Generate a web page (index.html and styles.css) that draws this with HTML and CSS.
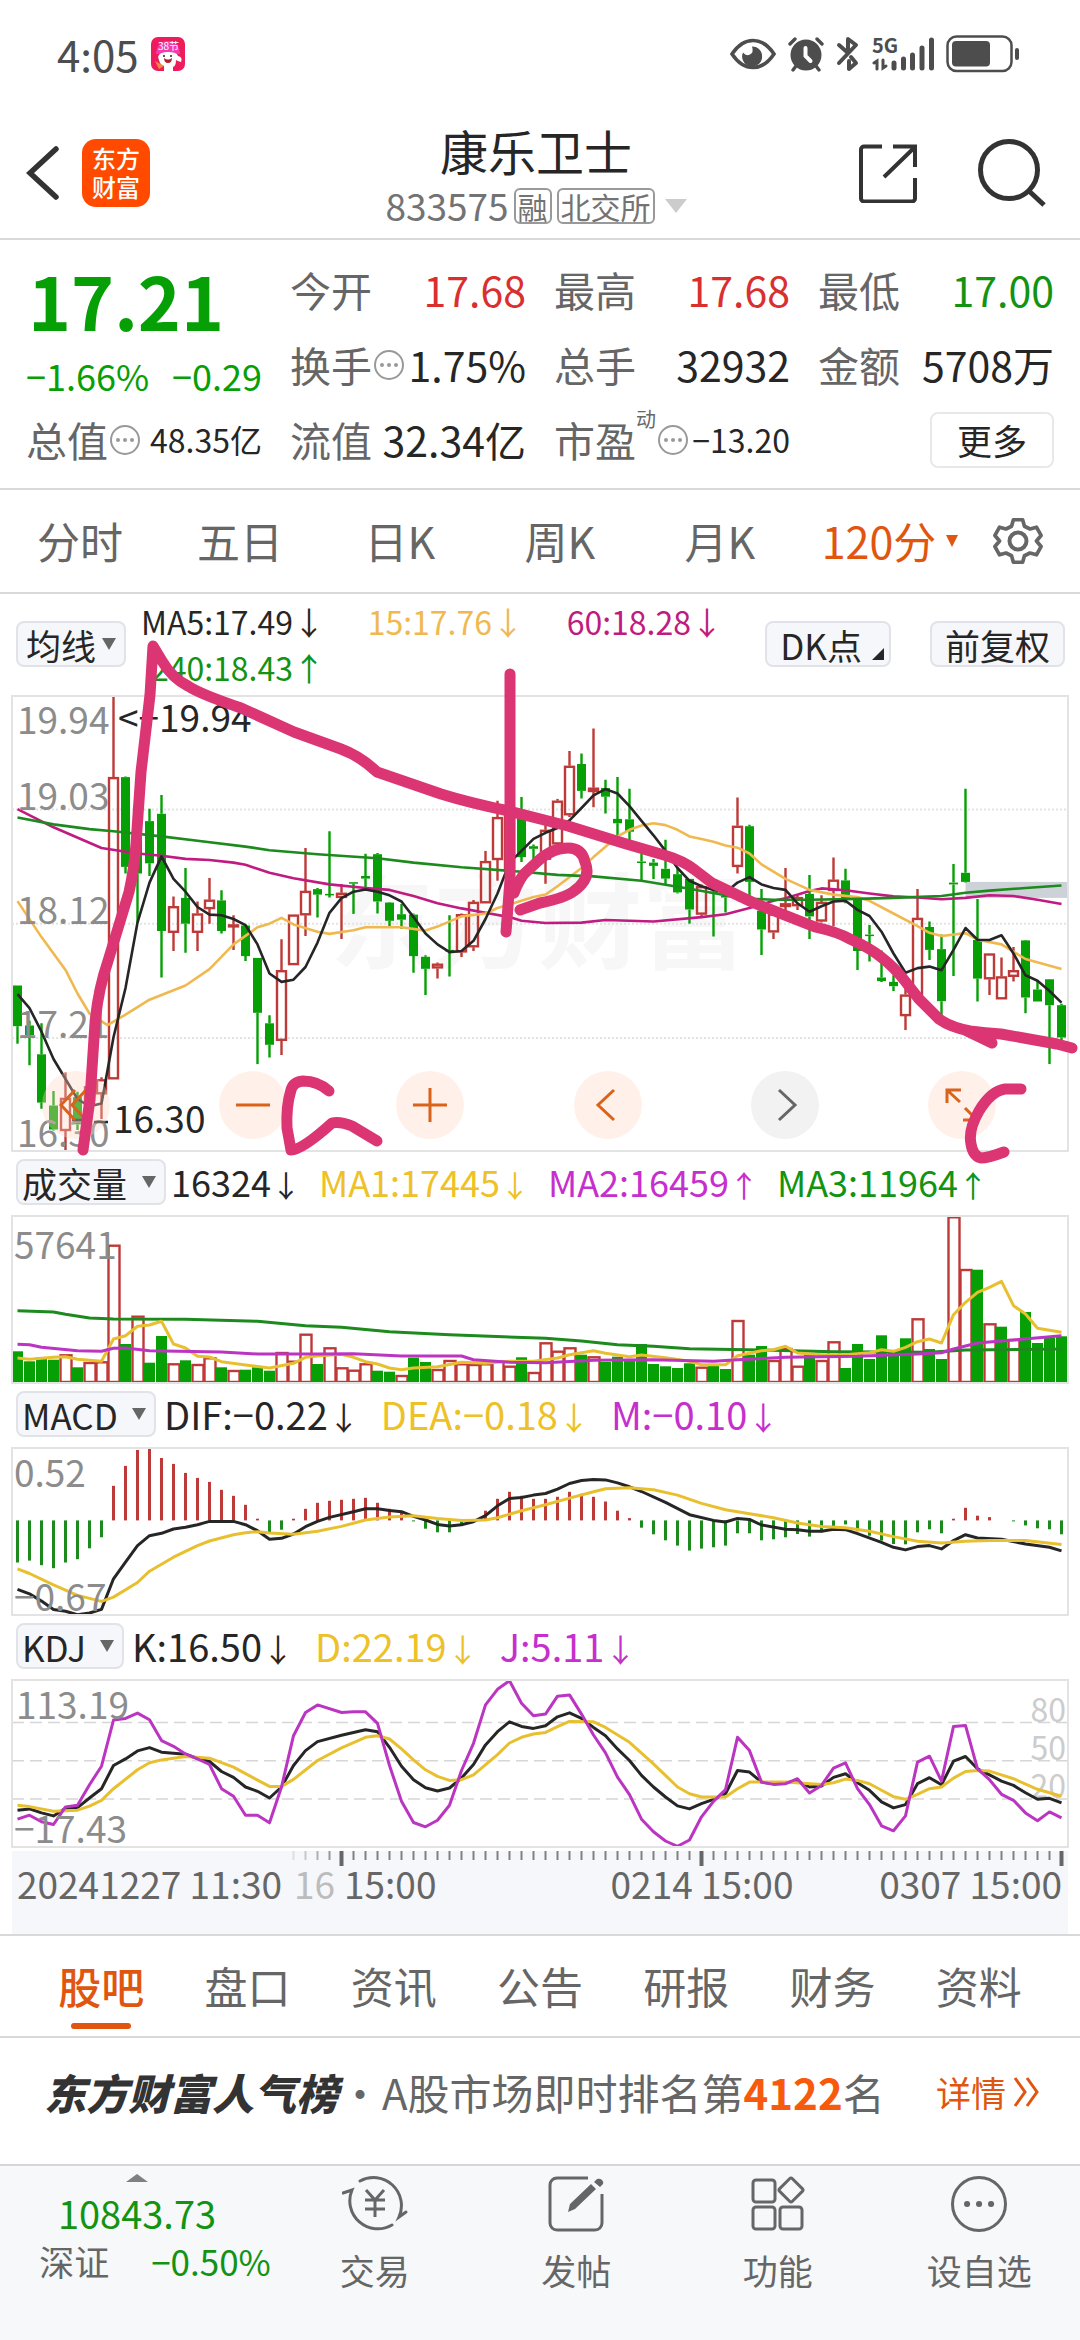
FILE: index.html
```html
<!DOCTYPE html>
<html lang="zh-CN">
<head>
    <meta charset="UTF-8">
    <meta name="viewport" content="width=device-width, initial-scale=1.0">
    <title>康乐卫士 833575</title>
    <link rel="stylesheet" href="styles.css">
</head>
<body>
    <div class="status">
        <span class="time">4:05</span>
        <svg class="promo" viewBox="0 0 34 34" width="34" height="34">
            <rect width="34" height="34" rx="7" fill="#ee1c5c"/>
            <path d="M5 17Q6 4 17 4t12 13z" fill="#f53bb0"/>
            <text x="7" y="13" font-size="10" fill="#fff">38节</text>
            <path d="M7 20q1-5 10-5t10 4q5 1 3 6-4-1-5-2 0 6-3 7v4H13v-5q-4-1-5-6z" fill="#fff"/>
            <path d="M13 21q4 3 8 0 0 5-4 5t-4-5z" fill="#b3202a"/>
            <circle cx="13" cy="19" r="1" fill="#222"/><circle cx="20" cy="19" r="1" fill="#222"/>
            <path d="M4 24l9 5-5 3z" fill="#f08a3c"/>
        </svg>
        <div class="status-icons">
            <svg viewBox="0 0 46 32" width="46" height="32" fill="none" stroke="#4d4d4d">
                <path d="M2 16Q11 2.500 23 2.500T44 16Q35 29.500 23 29.500T2 16z" stroke-width="3.600"/>
                <path d="M22 8.500a10 10 0 1 1-9 6q3 4 7 2t2-8z" fill="#4d4d4d" stroke="none"/>
            </svg>
            <svg viewBox="0 0 36 36" width="36" height="36" fill="none" stroke="#4d4d4d" stroke-width="3.400" stroke-linecap="round">
                <circle cx="18" cy="19" r="15.500" fill="#4d4d4d" stroke="none"/>
                <path d="M2 8l5-5M34 8l-5-5M8 30l-3 4M28 30l3 4"/>
                <path d="M17.500 12v8l5 5" stroke="#fff" stroke-width="4"/>
            </svg>
            <svg viewBox="0 0 24 36" width="24" height="36" fill="none" stroke="#4d4d4d" stroke-width="4" stroke-linecap="round" stroke-linejoin="round">
                <path d="M3 9l9 8V3l8 6L3 27M15 21l5 6-7 6v-8"/>
            </svg>
            <svg viewBox="0 0 62 36" width="62" height="36" fill="none" stroke="#4d4d4d" stroke-width="5" stroke-linecap="round">
                <text class="net" x="0" y="17" fill="#4d4d4d" stroke="none">5G</text>
                <path d="M22 27v5M31.500 23v9M40.500 19v13M50 12v20M59.500 4v28"/>
                <path d="M2 27l3-2v8M11 24v8l3-2" stroke-width="3"/>
            </svg>
            <svg viewBox="0 0 74 38" width="74" height="38">
                <rect x="1.500" y="1.500" width="64" height="34.500" rx="9" fill="none" stroke="#4d4d4d" stroke-width="2.500"/>
                <rect x="6" y="6" width="38" height="25.500" rx="4" fill="#4d4d4d"/>
                <rect x="69" y="13" width="4" height="12" rx="2" fill="#4d4d4d"/>
            </svg>
        </div>
    </div>

    <header class="top">
        <div class="top-left">
            <a href="#" class="back" aria-label="返回">
                <svg viewBox="0 0 34 56" width="34" height="56" fill="none" stroke="#333" stroke-width="5.500" stroke-linecap="round"><path d="M30 4L4 28l26 24"/></svg>
            </a>
            <a href="#" class="logo"><span>东方</span><span>财富</span></a>
        </div>
        <div class="stock">
            <h1>康乐卫士</h1>
            <div class="code">833575<span class="tag">融</span><span class="tag">北交所</span><i class="tri tri-light"></i></div>
        </div>
        <div class="top-right">
            <button class="icon-btn" aria-label="分享">
                <svg viewBox="0 0 60 60" width="60" height="60" fill="none" stroke="#333" stroke-width="4"><path d="M24 3.500H6a3 3 0 0 0-3 3v49a3 3 0 0 0 3 3h48a3 3 0 0 0 3-3V35M35 3.500h22V24M57 4L26 34"/></svg>
            </button>
            <button class="icon-btn" aria-label="搜索">
                <svg viewBox="0 0 68 68" width="68" height="68" fill="none" stroke="#333" stroke-width="5"><circle cx="31" cy="31" r="28.500"/><path d="M51 52l15 14"/></svg>
            </button>
        </div>
    </header>

    <section class="quote">
        <div class="price-box">
            <div class="price">17.21</div>
            <div class="change"><span>−1.66%</span><span>−0.29</span></div>
        </div>
        <div class="item"><span>今开</span><b class="red">17.68</b></div>
        <div class="item"><span>最高</span><b class="red">17.68</b></div>
        <div class="item"><span>最低</span><b class="green">17.00</b></div>
        <div class="item"><span>换手<i class="more-dot"></i></span><b>1.75%</b></div>
        <div class="item"><span>总手</span><b>32932</b></div>
        <div class="item"><span>金额</span><b>5708万</b></div>
        <div class="item"><span>总值<i class="more-dot"></i></span><b class="small">48.35亿</b></div>
        <div class="item"><span>流值</span><b>32.34亿</b></div>
        <div class="item"><span>市盈<sup>动</sup><i class="more-dot"></i></span><b class="small">−13.20</b></div>
        <div class="item item-more"><button class="more">更多</button></div>
    </section>

    <nav class="period">
        <a href="#">分时</a>
        <a href="#">五日</a>
        <a href="#">日K</a>
        <a href="#">周K</a>
        <a href="#">月K</a>
        <a href="#" class="active">120分<i class="tri tri-small"></i></a>
        <button class="icon-btn" aria-label="设置">
            <svg viewBox="0 0 52 52" width="52" height="52" fill="none" stroke="#666" stroke-width="4" stroke-linejoin="round">
                <path d="M21 3h10l2 7 6 3 7-2 5 9-5 6 5 6-5 9-7-2-6 3-2 7H21l-2-7-6-3-7 2-5-9 5-6-5-6 5-9 7 2 6-3z" transform="translate(2 2) scale(.923)"/>
                <circle cx="26" cy="26" r="8.500"/>
            </svg>
        </button>
    </nav>

    <main class="charts">
        <div class="ma-bar">
            <label class="picker picker-tight"><select aria-label="主图指标"><option>均线</option></select></label>
            <div class="ma-list">
                <span class="c-black">MA5:17.49↓</span>
                <span class="c-amber">15:17.76↓</span>
                <span class="c-purple">60:18.28↓</span>
                <span class="c-green">240:18.43↑</span>
            </div>
            <button class="chip chip-corner">DK点</button>
            <button class="chip">前复权</button>
        </div>

        <div class="panel">
            <svg id="kline" viewBox="0 0 1056 455"></svg>
            <div class="tools">
                <button class="round" aria-label="最左"><svg viewBox="0 0 34 34" width="34" height="34"><path d="M16 2L2 17l14 15M27 2L13 17l14 15"/></svg></button>
                <button class="round" aria-label="缩小"><svg viewBox="0 0 34 34" width="34" height="34"><path d="M0 17h34"/></svg></button>
                <button class="round" aria-label="放大"><svg viewBox="0 0 34 34" width="34" height="34"><path d="M0 17h34M17 0v34"/></svg></button>
                <button class="round" aria-label="左移"><svg viewBox="0 0 34 34" width="34" height="34"><path d="M23 2L7 17l16 15"/></svg></button>
                <button class="round round-grey" aria-label="右移"><svg viewBox="0 0 34 34" width="34" height="34"><path d="M11 2l16 15-16 15"/></svg></button>
                <button class="round" aria-label="全屏"><svg viewBox="0 0 34 34" width="34" height="34"><path d="M2 15V2h14M2 2l13 12M32 19v13H18M32 32L20 20"/></svg></button>
            </div>
        </div>

        <div class="sub-bar sub-volume">
            <label class="picker"><select aria-label="副图一"><option>成交量</option></select></label>
            <span class="c-black">16324<i>↓</i></span>
            <span class="c-yellow">MA1:17445<i>↓</i></span>
            <span class="c-magenta">MA2:16459<i>↑</i></span>
            <span class="c-green">MA3:11964<i>↑</i></span>
        </div>
        <div class="panel"><svg id="volume" viewBox="0 0 1056 167"></svg></div>

        <div class="sub-bar">
            <label class="picker"><select aria-label="副图二"><option>MACD</option></select></label>
            <span class="c-black">DIF:−0.22<i>↓</i></span>
            <span class="c-yellow">DEA:−0.18<i>↓</i></span>
            <span class="c-magenta">M:−0.10<i>↓</i></span>
        </div>
        <div class="panel"><svg id="macd" viewBox="0 0 1056 167"></svg></div>

        <div class="sub-bar">
            <label class="picker"><select aria-label="副图三"><option>KDJ</option></select></label>
            <span class="c-black">K:16.50<i>↓</i></span>
            <span class="c-yellow">D:22.19<i>↓</i></span>
            <span class="c-magenta">J:5.11<i>↓</i></span>
        </div>
        <div class="panel"><svg id="kdj" viewBox="0 0 1056 167"></svg></div>

        <div class="axis"><svg id="axis" viewBox="0 0 1056 83"></svg></div>

        <!-- hand drawn marks over the charts -->
        <svg class="marks" viewBox="0 594 1080 600">
            <path d="M83 1150L90 1099L95 1023Q98 990 108 961L129 892Q134 870 136 844L141 772L150 695L153 646L162 661Q172 678 188 686Q200 694 241 708L294 732L341 749Q360 756 377 772L441 794Q470 803 509 811L568 826L623 843L664 855Q684 861 695 870L712 883L754 903L815 927Q838 932 850 939Q870 948 881 957Q895 968 905 981L919 999L939 1019Q950 1027 970 1031Q985 1033 1001 1034L1057 1044L1072 1048M965 1030L992 1043"/>
            <path d="M510 674V880L506 932M520 910L540 903Q565 898 574 891Q592 878 585 862Q582 848 568 848Q552 848 538 861L524 874Q518 882 514 893"/>
            <path d="M329 1091Q318 1081 303 1081Q293 1082 291 1090Q286 1106 287 1128L291 1150Q302 1150 332 1123Q340 1121 352 1126L377 1141"/>
            <path d="M1021 1089H1005Q991 1091 979 1111Q968 1130 971 1144Q973 1156 981 1158Q988 1158 1004 1152"/>
        </svg>
    </main>

    <nav class="tabs">
        <a href="#" class="active">股吧</a>
        <a href="#">盘口</a>
        <a href="#">资讯</a>
        <a href="#">公告</a>
        <a href="#">研报</a>
        <a href="#">财务</a>
        <a href="#">资料</a>
    </nav>

    <section class="rank">
        <strong>东方财富人气榜</strong>
        <span class="dot">·</span>
        <span>A股市场即时排名第<b>4122</b>名</span>
        <a href="#">详情<svg viewBox="0 0 30 32" width="30" height="32" fill="none" stroke="#e0560f" stroke-width="3"><path d="M3 2l10 14L3 30M15 2l10 14-10 14"/></svg></a>
    </section>

    <footer class="bottom">
        <a href="#" class="index">
            <i class="tri-up"></i>
            <span class="index-value">10843.73</span>
            <span class="index-row"><span>深证</span><span class="green">−0.50%</span></span>
        </a>
        <a href="#">
            <svg viewBox="0 0 66 60" width="66" height="60" fill="none" stroke="#666" stroke-width="3" stroke-linecap="round">
                <path d="M18 7A28 28 0 0 1 57 43l7-5M50 51A28 28 0 0 1 10 16L1 19"/>
                <path d="M24 16l9 10 9-10M23 26h20M23 35h20M33 26v17" stroke-linecap="butt"/>
            </svg>
            交易
        </a>
        <a href="#">
            <svg viewBox="0 0 60 60" width="60" height="60" fill="none" stroke="#666" stroke-width="3">
                <path d="M42 4H11a7 7 0 0 0-7 7v38a7 7 0 0 0 7 7h38a7 7 0 0 0 7-7V20"/>
                <path d="M22 38l2-8 21-20 5 5-21 20zM48 8l3-3q3-1 5 1t1 4l-3 3z" fill="#666" stroke="none"/>
            </svg>
            发帖
        </a>
        <a href="#">
            <svg viewBox="0 0 56 60" width="56" height="60" fill="none" stroke="#666" stroke-width="3">
                <rect x="3" y="6" width="22" height="22" rx="3"/><rect x="3" y="33" width="22" height="22" rx="3"/><rect x="30" y="33" width="22" height="22" rx="3"/>
                <rect x="32" y="7" width="18" height="18" rx="2" transform="rotate(45 41 16)"/>
            </svg>
            功能
        </a>
        <a href="#">
            <svg viewBox="0 0 60 60" width="60" height="60" fill="none" stroke="#666" stroke-width="3">
                <circle cx="30" cy="30" r="26.500"/>
                <path d="M18 30h.1M30 30h.1M42 30h.1" stroke-width="6" stroke-linecap="round"/>
            </svg>
            设自选
        </a>
    </footer>
    <script src="script.js"></script>
</body>
</html>
```
FILE: styles.css
```css
*{
    margin: 0;
    padding: 0;
    box-sizing: border-box;
}
body{
    background-color: #fff;
    color: #262626;
    font-family: "Noto Sans CJK SC", sans-serif;
    line-height: 1.2;
}
a{
    color: inherit;
    text-decoration: none;
}
button, select{
    font-family: inherit;
    color: inherit;
    background: none;
    border: none;
}
i{
    font-style: normal;
}
svg{
    display: block;
}
.red{
    color: #d9302f;
}
.green, .c-green{
    color: #129312;
}
.c-black{
    color: #262626;
}
.c-amber{
    color: #f0b950;
}
.c-yellow{
    color: #edc127;
}
.c-purple{
    color: #bf1b80;
}
.c-magenta{
    color: #c62fcd;
}

/* status bar */
.status{
    display: flex;
    align-items: center;
    height: 108px;
    padding: 0 60px 0 57px;
}
.time{
    font-size: 42px;
    color: #4d4d4d;
}
.promo{
    margin-left: 12px;
}
.status-icons{
    display: flex;
    align-items: center;
    gap: 12px;
    margin-left: auto;
}
.net{
    font-size: 20px;
    font-weight: bold;
}

/* header */
.top{
    display: grid;
    grid-template-columns: 1fr auto 1fr;
    align-items: center;
    height: 132px;
    padding: 0 34px 0 26px;
    border-bottom: 2px solid #d9d9d9;
}
.top-left, .top-right{
    display: flex;
    align-items: center;
}
.top-left{
    gap: 22px;
}
.top-right{
    justify-content: flex-end;
    gap: 60px;
}
.icon-btn{
    display: flex;
    align-items: center;
    justify-content: center;
}
.logo{
    display: flex;
    flex-direction: column;
    align-items: center;
    justify-content: center;
    width: 68px;
    height: 68px;
    border-radius: 14px;
    background-color: #ff4a00;
    color: #fff;
    font-size: 24px;
    font-weight: 500;
}
.stock{
    text-align: center;
}
.stock h1{
    font-size: 48px;
    font-weight: normal;
}
.code{
    display: flex;
    align-items: center;
    justify-content: center;
    gap: 5px;
    margin-top: 8px;
    font-size: 37px;
    line-height: 1;
    color: #737373;
}
.tag{
    padding: 1px 2px;
    border: 2px solid #999;
    border-radius: 6px;
    font-size: 30px;
}
.tri{
    border: 11px solid transparent;
    border-bottom: 0;
    border-top: 14px solid #ccc;
}
.tri-light{
    margin-left: 5px;
}
.tri-small{
    border-width: 6px;
    border-top: 12px solid #e0560f;
    border-bottom: 0;
    margin-left: 10px;
}

/* quote */
.quote{
    display: grid;
    grid-template-columns: repeat(4, 1fr);
    grid-auto-rows: 75px;
    column-gap: 28px;
    padding: 12px 26px 11px;
    border-bottom: 2px solid #d9d9d9;
    font-size: 41px;
}
.price-box{
    grid-row: span 2;
    color: #06a006;
}
.price{
    font-size: 73px;
    font-weight: bold;
    padding: 4px 0 0 2px;
}
.change{
    display: flex;
    justify-content: space-between;
    margin-top: 10px;
    font-size: 36px;
}
.item{
    display: flex;
    align-items: center;
    justify-content: space-between;
    white-space: nowrap;
}
.item > span{
    display: flex;
    align-items: center;
    color: #666;
}
.item b{
    font-weight: normal;
}
.item .small{
    font-size: 32px;
}
.item sup{
    align-self: flex-start;
    margin-top: -8px;
    font-size: 20px;
}
.more-dot{
    display: flex;
    align-items: center;
    justify-content: center;
    width: 30px;
    height: 30px;
    margin-left: 2px;
    border: 2px solid #999;
    border-radius: 50%;
}
.more-dot::after{
    content: "";
    width: 4px;
    height: 4px;
    border-radius: 50%;
    background-color: #999;
    box-shadow: -7px 0 #999, 7px 0 #999;
}
.item.item-more{
    justify-content: flex-end;
}
.more{
    width: 124px;
    height: 56px;
    border: 2px solid #e8e8e8;
    border-radius: 8px;
    font-size: 35px;
}

/* period tabs */
.period{
    display: grid;
    grid-template-columns: repeat(5, 32fr) 36fr 15fr;
    align-items: center;
    height: 104px;
    padding-right: 25px;
    border-bottom: 2px solid #d9d9d9;
    font-size: 43px;
    color: #666;
}
.period a{
    display: flex;
    align-items: center;
    justify-content: center;
}
.period .active, .tabs .active{
    color: #e0560f;
}

/* charts */
.charts{
    position: relative;
    padding: 0 12px;
}
.ma-bar{
    display: flex;
    align-items: center;
    height: 102px;
    padding: 0 3px 2px 4px;
}
.picker{
    display: flex;
    align-items: center;
    height: 46px;
    padding: 0 8px 0 4px;
    border: 2px solid #e1e3e8;
    border-radius: 8px;
    background-color: #f6f7fa;
}
.picker select{
    appearance: none;
    font-size: 35px;
    margin-right: 14px;
}
.picker::after{
    content: "";
    border: 7px solid transparent;
    border-top: 12px solid #666;
    border-bottom: 0;
}
.picker.picker-tight{
    padding-left: 8px;
}
.picker-tight select{
    margin-right: 5px;
}
.ma-list{
    display: grid;
    grid-template-columns: repeat(3, 199px);
    row-gap: 8px;
    margin-right: auto;
    font-size: 32px;
    text-align: right;
}
.ma-list span{
    white-space: nowrap;
}
.chip{
    position: relative;
    height: 46px;
    margin-left: 39px;
    padding: 0 13px;
    border: 2px solid #e1e3e8;
    border-radius: 8px;
    background-color: #f6f7fa;
    font-size: 35px;
    line-height: 1;
    white-space: nowrap;
}
.chip.chip-corner{
    padding-right: 27px;
    margin-left: 0;
}
.chip-corner::after{
    content: "";
    position: absolute;
    right: 5px;
    bottom: 5px;
    border-left: 12px solid transparent;
    border-bottom: 12px solid #262626;
}
.panel{
    position: relative;
    outline: 2px solid #e3e3e3;
    outline-offset: -1px;
}
.panel > svg, .axis svg{
    width: 100%;
    height: auto;
}
.label{
    font-size: 37px;
    fill: #8c8c8c;
}
.label-dark{
    font-size: 37px;
    fill: #262626;
}
.label-level{
    font-size: 32px;
    fill: #ccc;
}
.label-date{
    font-size: 37px;
    fill: #666;
}
.watermark{
    font-size: 104px;
    font-weight: bold;
    fill: #f7f7f7;
}
.tools{
    position: absolute;
    left: 0;
    right: 0;
    bottom: 12px;
    display: flex;
    justify-content: space-between;
    padding: 0 72px 0 30px;
}
.round{
    display: flex;
    align-items: center;
    justify-content: center;
    width: 68px;
    height: 68px;
    border-radius: 50%;
    background-color: rgba(255, 214, 192, .35);
}
.round svg{
    fill: none;
    stroke: #d9631b;
    stroke-width: 3;
}
.round.round-grey{
    background-color: #f2f2f2;
}
.round-grey svg{
    stroke: #666;
}
.sub-bar{
    display: flex;
    align-items: center;
    gap: 21px;
    height: 65px;
    padding: 0 4px 3px;
    font-size: 38px;
    white-space: nowrap;
}
.sub-bar.sub-volume{
    gap: 18px;
    font-size: 36px;
}
.sub-bar .picker{
    margin-right: -13px;
}
.sub-bar i{
    font-size: 32px;
}
.sub-volume i{
    font-size: 30px;
}
.axis{
    margin-top: 4px;
    background-color: #f6f7fa;
}
.marks{
    position: absolute;
    left: 0;
    top: 0;
    width: 100%;
    pointer-events: none;
    fill: none;
    stroke: #db3573;
    stroke-width: 11;
    stroke-linecap: round;
    stroke-linejoin: round;
}

/* tabs */
.tabs{
    display: flex;
    height: 104px;
    padding: 0 28px;
    border-top: 2px solid #d9d9d9;
    border-bottom: 2px solid #d9d9d9;
    font-size: 43px;
    color: #666;
}
.tabs a{
    flex: 1;
    display: flex;
    align-items: center;
    justify-content: center;
    position: relative;
}
.tabs .active{
    font-weight: 500;
}
.tabs .active::after{
    content: "";
    position: absolute;
    bottom: 7px;
    width: 60px;
    height: 6px;
    border-radius: 3px;
    background-color: #e0560f;
}

/* rank */
.rank{
    display: flex;
    align-items: center;
    height: 126px;
    padding: 0 38px 18px 44px;
    font-size: 42px;
    color: #666;
    white-space: nowrap;
}
.rank strong{
    color: #333;
    font-style: italic;
    font-weight: 900;
}
.rank .dot{
    width: 44px;
    text-align: center;
}
.rank b{
    color: #f75a0c;
}
.rank a{
    display: flex;
    align-items: center;
    gap: 6px;
    margin-left: auto;
    font-size: 35px;
    color: #e0560f;
}

/* bottom bar */
.bottom{
    display: grid;
    grid-template-columns: 34fr repeat(4, 25fr);
    height: 176px;
    border-top: 2px solid #d4d6d9;
    background-color: #f6f8fa;
    font-size: 35px;
    color: #666;
}
.bottom a{
    display: flex;
    flex-direction: column;
    align-items: center;
    gap: 15px;
    padding-top: 8px;
}
.bottom .index{
    gap: 4px;
}
.tri-up{
    border: 11px solid transparent;
    border-top: 0;
    border-bottom: 8px solid #808080;
}
.index-value{
    margin-top: 4px;
    font-size: 38px;
    color: #129312;
}
.index-row{
    display: flex;
    align-items: center;
    gap: 42px;
    padding-left: 36px;
}
```
FILE: script.js
```js
const NS = 'http://www.w3.org/2000/svg';
const STEP = 12;
const RED = '#be3a38';
const GREEN = '#06a006';
const BLACK = '#262626';
const YELLOW = '#e8c02f';
const MAGENTA = '#bb35c2';
const LINE_GREEN = '#1d8a1d';

function add(svg, name, attrs, text) {
    const el = document.createElementNS(NS, name);
    for (const key in attrs) el.setAttribute(key, attrs[key]);
    if (text) el.textContent = text;
    svg.appendChild(el);
    return el;
}

// maps a raw value to the panel height
function scale(top, bottom, height) {
    return v => Math.round((v - top) * height / (bottom - top) * 10) / 10;
}

function xAt(i) {
    return 5.5 + i * STEP;
}

// data is a flat list: index, value, index, value...
function line(svg, y, data, color, width = 3) {
    const nums = data.trim().split(/\s+/).map(Number);
    let points = '';
    for (let k = 0; k < nums.length; k += 2) {
        points += xAt(nums[k]) + ',' + y(nums[k + 1]) + ' ';
    }
    add(svg, 'polyline', { points, fill: 'none', stroke: color, 'stroke-width': width, 'stroke-linejoin': 'round' });
}

function label(svg, x, y, text, cls = 'label', anchor = 'start') {
    return add(svg, 'text', { x, y, class: cls, 'text-anchor': anchor }, text);
}

// color, body top, body bottom, high, low
const candles = `g 1088 1200 1088 1248|g 1198 1224 1185 1307|g 1277 1410 1192 1427|g 1418 1484 1378 1487
r 1397 1488 1327 1545|g 1395 1470 1380 1485|r 1365 1415 1360 1430|r 1346 1387 1340 1455|r 515 1346 292 1346
g 515 762 513 780|g 660 780 640 915|g 636 752 602 787|g 616 938 564 1066|r 870 943 843 993|g 847 918 765 998
r 890 943 857 993|r 852 878 792 918|g 854 938 826 945|r 920 927 895 990|g 923 1007 920 1021|g 1012 1163 1012 1304
g 1192 1251 1170 1286|r 1046 1240 961 1279|r 893 1032 893 1032|r 828 895 710 952|g 823 838 820 901|g 836 839 664 846
r 833 847 809 960|g 804 808 804 891|g 787 794 726 825|g 727 857 724 890|g 860 910 858 928|g 892 907 864 932
g 893 1007 890 1053|g 1009 1042 1005 1114|r 1028 1041 1025 1069|g 990 994 895 1063|r 892 997 890 1010|r 858 983 853 993
r 746 862 718 862|r 625 743 580 800|r 610 770 600 780|g 626 735 570 748|g 705 712 700 745|r 660 742 645 808
r 580 700 575 700|r 484 620 443 625|g 479 553 450 574|r 544 556 381 598|g 545 569 522 615|g 630 642 515 680
g 631 665 547 690|g 747 751 725 800|g 750 759 740 795|g 767 794 687 812|g 782 832 765 835|g 795 879 795 918
r 815 893 810 900|g 830 833 815 953|g 842 846 840 887|r 649 762 571 780|g 650 803 646 842|g 882 934 823 1004
r 890 942 885 960|r 862 872 765 907|r 845 870 840 880|g 836 898 784 960|r 858 912 840 915|r 797 828 736 925
g 799 848 767 862|g 848 993 842 1045|g 948 952 922 1022|g 1066 1076 992 1078|g 1078 1090 1060 1103|r 1113 1172 1085 1210
r 902 1115 823 1120|g 927 990 912 1018|g 988 1131 948 1195|g 805 810 754 1062|g 778 803 547 805|g 963 1069 850 1132
r 1000 1071 1000 1114|r 1063 1126 1011 1126|r 1046 1064 982 1077|g 964 1121 963 1164|g 1099 1132 1075 1132|g 1071 1142 1070 1304
g 1142 1231 1138 1245`;

function drawKline() {
    const svg = document.querySelector('#kline');
    const y = scale(292, 1543, 455);
    label(svg, 318, 265, '东方财富', 'watermark');
    for (const v of [604, 918, 1232]) {
        add(svg, 'path', { d: `M0 ${y(v)}H1056`, stroke: '#e3e3e3', 'stroke-width': 2, 'stroke-dasharray': '2 2' });
    }
    add(svg, 'rect', { x: xAt(79), y: y(803), width: 1056 - xAt(79), height: 16, fill: '#cdd2d9' });
    candles.split(/[|\n]/).forEach((row, i) => {
        const [c, ...n] = row.trim().split(' ');
        const [top, bottom, high, low] = n.map(v => y(Number(v)));
        const x = xAt(i);
        const color = c === 'r' ? RED : GREEN;
        add(svg, 'path', { d: `M${x} ${high}V${top}M${x} ${bottom}V${low}`, stroke: color, 'stroke-width': 2.4 });
        if (c === 'r') {
            add(svg, 'rect', { x: x - 4.5, y: top + 1, width: 9, height: Math.max(bottom - top - 2, 1), fill: 'none', stroke: RED, 'stroke-width': 2.4 });
        } else {
            add(svg, 'rect', { x: x - 4.5, y: top, width: 9, height: Math.max(bottom - top, 1.5), fill: GREEN });
        }
    });
    line(svg, y, '0 603 3 653 7 710 10 725 12 731 14 740 16 743 18 750 19 756 21 778 23 793 26 810 29 820 31 825 33 842 35 862 37 876 39 888 41 900 42 910 44 916 47 915 49 908 53 912 57 900 59 892 61 875 63 855 64 848 66 828 67 821 69 826 71 835 73 843 75 846 77 851 79 847 81 840 83 842 85 852 87 864', '#bf1b80', 2.6);
    line(svg, y, '0 856 2 955 4 1045 5 1110 6 1165 7.500 1197 9 1168 11 1127 14 1088 16 1043 18 975 20 928 21 918 22 902 23 920 25 940 26 946 28 936 29 928 32 928 34 937 35 926 37 898 39 890 40 875 41 865 42 855 43 845 44 838 45 815 47 765 48 735 50 678 51 660 52 648 53 642 54 647 55 660 56 678 57 685 58 693 59 703 60 709 61 725 62 755 64 795 66 825 68 838 70 845 71 855 73 890 75 925 76 943 77 952 79 944 80 962 82 975 84 1015 87 1043', '#f0b950', 2.6);
    line(svg, y, '0 626 3 645 6 658 8 664 12 678 15 690 19 706 21 716 25 727 30 738 33 750 37 763 42 775 45 784 48 788 52 800 56 822 59 840 61 850 63 852 66 852 70 850 73 847 77 842 79 833 81 827 84 820 87 813', LINE_GREEN, 2.6);
    line(svg, y, '0 1112 1 1150 2 1215 3 1290 4 1345 5 1400 6 1420 7 1412 8 1230 9 1095 10 915 11 805 12 733 13 795 14 830 15 872 16 893 17 895 18 905 19 922 20 975 21 1055 22 1078 23 1072 24 1037 25 970 26 888 27 848 28 830 29 824 30 830 31 840 32 857 33 900 34 945 35 975 36 996 37 993 38 965 39 905 40 835 41 750 42 718 43 685 44 668 45 655 46 634 47 600 48 565 49 548 50 560 51 595 52 635 53 675 54 718 55 765 56 800 57 815 58 825 59 832 60 805 61 790 62 810 63 820 64 825 65 862 66 885 67 870 68 857 69 855 70 880 71 897 72 940 73 1000 74 1053 75 1040 76 1036 77 1046 78 990 79 930 80 962 81 963 82 950 83 1000 84 1060 85 1075 86 1103 87 1135', BLACK, 2.6);
    label(svg, 5, 38, '19.94');
    label(svg, 5, 114, '19.03');
    label(svg, 5, 228, '18.12');
    label(svg, 5, 342, '17.21');
    label(svg, 5, 451, '16.30');
    label(svg, 106, 36, '<−19.94', 'label-dark');
    add(svg, 'path', { d: 'M60 424h10M82 426h14', stroke: BLACK, 'stroke-width': 2.4 });
    label(svg, 101, 437, '16.30', 'label-dark');
}

const volumes = `g602 g632 g620 g627 r611 g650 r634 r632 r282 g580 r495 g636 g556 r638 g629 r640 r620 g650 r658 g657 g650 g660
r604 r630 r549 g640 r590 r650 r657 r638 g660 g663 r673 g621 g634 r655 r628 r638 r640 r638 r630 r645 g620 r664
r575 r600 r590 g612 r617 g634 g618 g625 g580 g640 g647 g652 g638 r648 g645 g655 r508 g612 g586 r628 r592 r645
g612 r628 r572 g652 g580 g625 g554 g605 g563 r503 g595 g625 r197 r355 g357 r518 g528 r565 g484 g577 g562 g557`;

function drawVolume() {
    const svg = document.querySelector('#volume');
    const y = scale(196, 697, 167);
    volumes.split(/\s+/).forEach((item, i) => {
        const top = y(Number(item.slice(1)));
        const x = xAt(i) - 5.5;
        if (item[0] === 'r') {
            add(svg, 'rect', { x: x + .5, y: top + 1, width: 11, height: 165 - top, fill: '#fff', stroke: RED, 'stroke-width': 2.4 });
        } else {
            add(svg, 'rect', { x, y: top, width: 11, height: 167 - top, fill: GREEN });
        }
    });
    line(svg, y, '0 480 3 484 4 491 6 502 8 505 14 506 20 512 24 525 27 530 31 543 36 552 44 563 47 571 50 582 53 587 56 594 62 598 68 603 76 605 79 598 87 595', LINE_GREEN);
    line(svg, y, '0 622 1 626 3 620 4 618 5 626 7 632 8 565 9 555 10 527 11 523 12 512 13 580 14 592 15 617 16 619 17 633 19 643 21 652 23 638 24 620 25 616 27 611 28 620 29 633 30 640 31 652 32 657 33 652 35 648 37 635 39 638 41 632 43 632 45 622 46 612 47 606 48 600 49 608 51 618 52 613 54 621 56 632 57 642 59 642 60 615 62 600 63 597 64 587 65 607 67 612 69 612 71 606 72 597 73 602 74 590 75 573 76 565 77 577 78 492 79 455 80 425 81 410 82 392 83 465 84 490 85 533 87 545', YELLOW);
    line(svg, y, '0 581 1 582 2 590 5 600 7 602 8 593 9 592 11 600 17 604 20 610 25 610 28 609 32 616 37 616 38 627 41 635 44 636 48 629 53 627 58 632 60 627 64 620 70 617 75 610 77 606 78 595 80 577 83 568 87 555', MAGENTA);
    label(svg, 2, 43, '57641');
}

const hist = [1236, 1230, 1244, 1253, 1236, 1226, 1193, 1160, 1005, 945, 897, 891, 921, 939, 966, 981, 993, 1017, 1035, 1062, 1104, 1145,
    1137, 1104, 1074, 1056, 1050, 1047, 1044, 1041, 1056, 1074, 1085, 1112, 1134, 1145, 1145, 1122, 1105, 1080, 1044, 1023, 1035, 1044,
    1044, 1038, 1023, 1029, 1038, 1052, 1080, 1102, 1131, 1151, 1169, 1185, 1200, 1194, 1190, 1185, 1148, 1148, 1169, 1166, 1160, 1150,
    1158, 1145, 1128, 1121, 1142, 1155, 1170, 1180, 1181, 1145, 1136, 1148, 1104, 1071, 1095, 1099, 1109, 1112, 1124, 1133, 1136, 1151];

function drawMacd() {
    const svg = document.querySelector('#macd');
    const y = scale(891, 1394, 167);
    const zero = 1109;
    hist.forEach((v, i) => {
        add(svg, 'path', { d: `M${xAt(i)} ${y(zero)}V${y(v)}`, stroke: v < zero ? RED : LINE_GREEN, 'stroke-width': 3 });
    });
    line(svg, y, '0 1317 1 1330 2 1352 3 1377 4 1383 5 1393 6 1388 7 1377 8 1285 9 1235 10 1185 11 1155 12 1148 13 1135 14 1130 15 1122 16 1112 18 1112 19 1122 20 1140 21 1166 22 1163 23 1150 24 1128 25 1112 26 1100 28 1083 29 1074 30 1074 31 1079 32 1083 33 1097 34 1108 35 1121 36 1126 37 1122 38 1113 39 1095 40 1065 41 1043 42 1040 43 1033 44 1028 45 1015 46 998 47 989 48 986 49 987 50 996 51 1008 52 1022 54 1055 56 1092 58 1109 59 1114 60 1103 61 1106 62 1123 64 1136 65 1137 66 1142 67 1142 68 1136 69 1137 70 1149 72 1175 73 1190 74 1198 75 1188 76 1185 77 1195 78 1170 79 1152 80 1162 82 1166 84 1180 86 1190 87 1201', BLACK);
    line(svg, y, '0 1255 1 1269 3 1303 5 1335 7 1353 8 1340 10 1296 11 1262 13 1220 15 1185 16 1171 18 1152 19 1146 20 1143 21 1147 23 1151 25 1142 27 1127 29 1108 31 1099 33 1095 35 1103 37 1109 39 1108 40 1101 42 1080 44 1062 46 1042 48 1023 49 1014 51 1011 53 1017 55 1033 57 1058 59 1077 61 1089 63 1101 65 1117 67 1127 69 1131 71 1142 73 1158 75 1172 77 1177 79 1172 81 1170 84 1170 87 1182', YELLOW);
    label(svg, 2, 39, '0.52');
    label(svg, 2, 163, '−0.67');
}

function drawKdj() {
    const svg = document.querySelector('#kdj');
    const y = scale(417, 921, 167);
    for (const v of [545, 661, 776]) {
        add(svg, 'path', { d: `M0 ${y(v)}H1056`, stroke: '#d6d6d6', 'stroke-width': 1.5, 'stroke-dasharray': '12 6' });
    }
    label(svg, 1054, 42, '80', 'label-level', 'end');
    label(svg, 1054, 80, '50', 'label-level', 'end');
    label(svg, 1054, 118, '20', 'label-level', 'end');
    line(svg, y, '0 810 1 806 2 818 3 827 4 804 5 802 6 773 7 745 8 675 9 655 10 631 11 621 12 635 14 641 15 654 16 663 17 693 18 711 19 740 20 753 21 773 22 740 23 675 24 630 25 603 27 584 29 567 30 573 31 620 32 677 33 718 34 742 35 752 36 743 37 713 38 672 39 613 40 573 41 543 42 557 43 563 44 555 45 528 46 516 47 533 48 560 49 585 50 625 51 660 52 705 53 740 54 770 55 797 56 806 57 790 58 777 59 760 60 690 61 695 62 725 63 730 64 728 65 722 66 740 67 737 68 711 69 700 70 727 71 750 72 785 73 803 74 793 75 730 76 712 77 733 78 662 79 648 80 685 81 703 82 722 83 735 84 757 85 777 86 774 87 788', BLACK);
    line(svg, y, '0 795 1 799 3 813 5 810 6 798 7 780 8 745 10 688 11 667 12 658 14 648 16 653 18 680 20 719 21 738 22 738 23 717 25 660 27 622 29 590 30 585 31 595 32 625 33 658 34 688 35 708 36 720 37 718 38 703 40 642 41 607 42 590 43 580 44 575 45 558 46 542 48 543 49 560 51 605 53 670 55 740 56 760 57 770 59 770 60 745 61 725 64 725 67 732 68 727 69 716 70 720 71 730 72 750 73 769 74 777 75 762 76 745 77 740 78 713 79 693 80 690 81 692 83 715 85 747 87 768', YELLOW);
    line(svg, y, '0 837 1 825 2 845 3 853 4 800 5 795 6 733 7 677 8 538 9 533 10 517 11 537 12 600 13 617 14 640 15 655 16 672 17 745 18 768 19 825 20 825 21 848 22 740 23 585 24 515 25 492 27 515 28 513 29 513 30 548 31 675 32 783 33 847 34 860 35 840 36 795 37 690 38 608 39 492 40 445 41 419 42 487 43 525 44 520 45 466 46 462 47 520 48 583 49 637 50 710 51 763 52 837 53 875 54 903 55 919 56 900 57 830 58 783 59 748 60 590 61 630 62 725 63 732 64 730 65 715 66 758 67 735 68 683 69 667 70 745 71 793 72 857 73 872 74 827 75 665 76 647 77 722 78 557 79 554 80 685 81 718 82 762 83 780 84 818 85 842 86 815 87 833', MAGENTA);
    label(svg, 4, 39, '113.19');
    label(svg, 2, 163, '−17.43');
}

function drawAxis() {
    const svg = document.querySelector('#axis');
    for (let i = 23; i < 88; i++) {
        const major = i === 27 || i === 57 || i === 87;
        add(svg, 'path', {
            d: `M${xAt(i)} 0v${major ? 15 : 9}`,
            stroke: major ? '#666' : '#808080',
            'stroke-width': major ? 4 : 2,
            opacity: Math.min(1, (i - 22) / 5)
        });
    }
    label(svg, 5, 48, '20241227 11:30', 'label-date');
    label(svg, 282, 48, '16', 'label-date').setAttribute('opacity', .4);
    label(svg, 332, 48, '15:00', 'label-date');
    label(svg, 690, 48, '0214 15:00', 'label-date', 'middle');
    label(svg, 1050, 48, '0307 15:00', 'label-date', 'end');
}

drawKline();
drawVolume();
drawMacd();
drawKdj();
drawAxis();
```
